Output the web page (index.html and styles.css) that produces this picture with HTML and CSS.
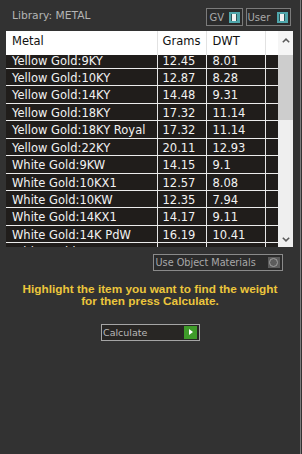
FILE: index.html
```html
<!DOCTYPE html>
<html lang="en">
  <head>
    <meta charset="UTF-8" />
    <meta name="viewport" content="width=device-width, initial-scale=1.0" />
    <title>Metal Weight</title>
    <link rel="stylesheet" href="styles.css">
  </head>
  <body>
    <div class="panel">
      <!-- Library header with GV / User switches -->
      <div class="topbar">
        <span class="title">Library: METAL</span>
        <div class="toggles">
          <span class="toggle gv">GV<i class="switch"></i></span>
          <span class="toggle user">User<i class="switch"></i></span>
        </div>
      </div>

      <!-- Metal list -->
      <div class="table">
        <div class="grid">
          <div class="row head">
            <span class="cell c1">Metal</span>
            <span class="cell c2">Grams</span>
            <span class="cell c3">DWT</span>
            <span class="cell c4"></span>
          </div>
          <div class="rows">
            <div class="rows-inner">
              <div class="row"><span class="cell c1">Yellow Gold:9KY</span><span class="cell c2">12.45</span><span class="cell c3">8.01</span><span class="cell c4"></span></div>
              <div class="row"><span class="cell c1">Yellow Gold:10KY</span><span class="cell c2">12.87</span><span class="cell c3">8.28</span><span class="cell c4"></span></div>
              <div class="row"><span class="cell c1">Yellow Gold:14KY</span><span class="cell c2">14.48</span><span class="cell c3">9.31</span><span class="cell c4"></span></div>
              <div class="row"><span class="cell c1">Yellow Gold:18KY</span><span class="cell c2">17.32</span><span class="cell c3">11.14</span><span class="cell c4"></span></div>
              <div class="row"><span class="cell c1">Yellow Gold:18KY Royal</span><span class="cell c2">17.32</span><span class="cell c3">11.14</span><span class="cell c4"></span></div>
              <div class="row"><span class="cell c1">Yellow Gold:22KY</span><span class="cell c2">20.11</span><span class="cell c3">12.93</span><span class="cell c4"></span></div>
              <div class="row"><span class="cell c1">White Gold:9KW</span><span class="cell c2">14.15</span><span class="cell c3">9.1</span><span class="cell c4"></span></div>
              <div class="row"><span class="cell c1">White Gold:10KX1</span><span class="cell c2">12.57</span><span class="cell c3">8.08</span><span class="cell c4"></span></div>
              <div class="row"><span class="cell c1">White Gold:10KW</span><span class="cell c2">12.35</span><span class="cell c3">7.94</span><span class="cell c4"></span></div>
              <div class="row"><span class="cell c1">White Gold:14KX1</span><span class="cell c2">14.17</span><span class="cell c3">9.11</span><span class="cell c4"></span></div>
              <div class="row"><span class="cell c1">White Gold:14K PdW</span><span class="cell c2">16.19</span><span class="cell c3">10.41</span><span class="cell c4"></span></div>
              <div class="row"><span class="cell c1">White Gold:14KW</span><span class="cell c2">13.57</span><span class="cell c3">8.88</span><span class="cell c4"></span></div>
            </div>
          </div>
        </div>
        <div class="scrollbar">
          <div class="sb-up">
            <svg width="8" height="5" viewBox="0 0 8 5"><path d="M0.8 4.3 L4 1.1 L7.2 4.3" fill="none" stroke="#5a5a5a" stroke-width="1.5"/></svg>
          </div>
          <div class="sb-thumb"></div>
          <div class="sb-track"></div>
          <div class="sb-down">
            <svg width="8" height="5" viewBox="0 0 8 5"><path d="M0.8 0.7 L4 3.9 L7.2 0.7" fill="none" stroke="#5a5a5a" stroke-width="1.5"/></svg>
          </div>
        </div>
      </div>

      <div class="options">
        <span class="check">Use Object Materials<i class="radio"></i></span>
      </div>

      <p class="hint">Highlight the item you want to find the weight<br>for then press Calculate.</p>

      <div class="actions">
        <button class="calc">Calculate<i class="go"></i></button>
      </div>
    </div>
  </body>
</html>
```

FILE: styles.css
```css
* {
  box-sizing: border-box;
}
body {
  margin: 0;
  background: #323232;
  font-family: "DejaVu Sans", Verdana, sans-serif;
}
.panel {
  width: 301px;
  height: 454px;
  border-right: 1px solid #7a7a7a;
  background: #323232;
}

/* top bar */
.topbar {
  display: flex;
  height: 31px;
  padding: 8px 9px 0 12px;
}
.title {
  font-size: 10.7px;
  line-height: 13px;
  color: #b4b4b4;
  padding-top: 1px;
}
.toggles {
  margin-left: auto;
  display: flex;
  gap: 3px;
}
.toggle {
  display: flex;
  align-items: center;
  justify-content: space-between;
  height: 18px;
  border: 1px solid #7b7b7b;
  background: #2b2b2b;
  color: #a8a8a8;
  font-size: 10px;
  padding: 0 2px 0 2.5px;
}
.toggle.gv {
  width: 37px;
}
.toggle.user {
  width: 45px;
  padding-left: 0.5px;
}
.switch {
  width: 11.5px;
  height: 11px;
  background: #4fa6ab;
  display: flex;
  align-items: center;
  justify-content: center;
}
.switch::before {
  content: "";
  width: 4px;
  height: 7px;
  background: #f2f2f2;
  border-left: 1px solid #2e5355;
  border-right: 1px solid #2e5355;
}

/* list */
.table {
  display: flex;
  margin-left: 6px;
  width: 287px;
  height: 216px;
  font-size: 11.5px;
}
.grid {
  width: 272px;
  display: flex;
  flex-direction: column;
}
.row {
  display: flex;
}
.cell {
  border-right: 1px solid #e6e6e6;
  white-space: nowrap;
  overflow: hidden;
}
.c1 {
  width: 152px;
  padding-left: 6px;
}
.c2 {
  width: 49px;
  padding-left: 4.5px;
}
.c3 {
  width: 59px;
  padding-left: 5.5px;
}
.c4 {
  width: 12px;
  border-right: 0;
}
.head {
  height: 24px;
  background: #fff;
  color: #111;
  line-height: 20px;
}
.head .cell {
  border-right-color: #e2e2e2;
}
.rows {
  height: 192px;
  overflow: hidden;
  background: #201d1b;
}
.rows-inner {
  margin-top: -3.4px;
}
.rows .row {
  height: 17.43px;
  border-bottom: 1px solid #ececec;
  color: #f2f2f2;
}
.rows .cell {
  padding-top: 2px;
  line-height: 14.4px;
}

/* scrollbar */
.scrollbar {
  width: 15px;
  display: flex;
  flex-direction: column;
  background: #efefef;
}
.sb-up {
  height: 24px;
  background: #f5f5f5;
  display: flex;
  justify-content: center;
  padding-top: 7px;
}
.sb-thumb {
  height: 65px;
  background: #cdcdcd;
}
.sb-track {
  flex: 1;
}
.sb-down {
  height: 16px;
  display: flex;
  justify-content: center;
  padding-top: 5.5px;
}
svg {
  display: block;
}

/* bottom controls */
.options {
  display: flex;
  justify-content: flex-end;
  padding-right: 17px;
  margin-top: 7px;
}
.check {
  width: 130px;
  height: 16.5px;
  border: 1px solid #8a8a8a;
  background: #2b2b2b;
  color: #a8a8a8;
  font-size: 9.7px;
  display: flex;
  align-items: center;
  justify-content: space-between;
  padding: 0 2px 0 1.5px;
}
.radio {
  width: 12.5px;
  height: 11px;
  background: #5c5c5c;
  display: flex;
  align-items: center;
  justify-content: center;
}
.radio::before {
  content: "";
  width: 7px;
  height: 7px;
  border: 1px solid #a0a0a0;
  border-radius: 50%;
}
.hint {
  margin: 12.4px 0 0;
  text-align: center;
  font: bold 11.8px/12.5px "Liberation Sans", Arial, sans-serif;
  color: #ecc63c;
}
.actions {
  display: flex;
  justify-content: center;
  margin-top: 16px;
}
.calc {
  width: 99px;
  height: 17px;
  border: 1px solid #a5a5a5;
  background: #282624;
  color: #b8b8b8;
  font-family: "DejaVu Sans", Verdana, sans-serif;
  font-size: 9.5px;
  display: flex;
  align-items: center;
  justify-content: space-between;
  padding: 0 1.5px 0 1.5px;
  margin: 0;
}
.go {
  width: 13px;
  height: 12.7px;
  background: #3f9b2a;
  display: flex;
  align-items: center;
  justify-content: center;
}
.go::before {
  content: "";
  border-left: 4px solid #fff;
  border-top: 3.5px solid transparent;
  border-bottom: 3.5px solid transparent;
}
```
